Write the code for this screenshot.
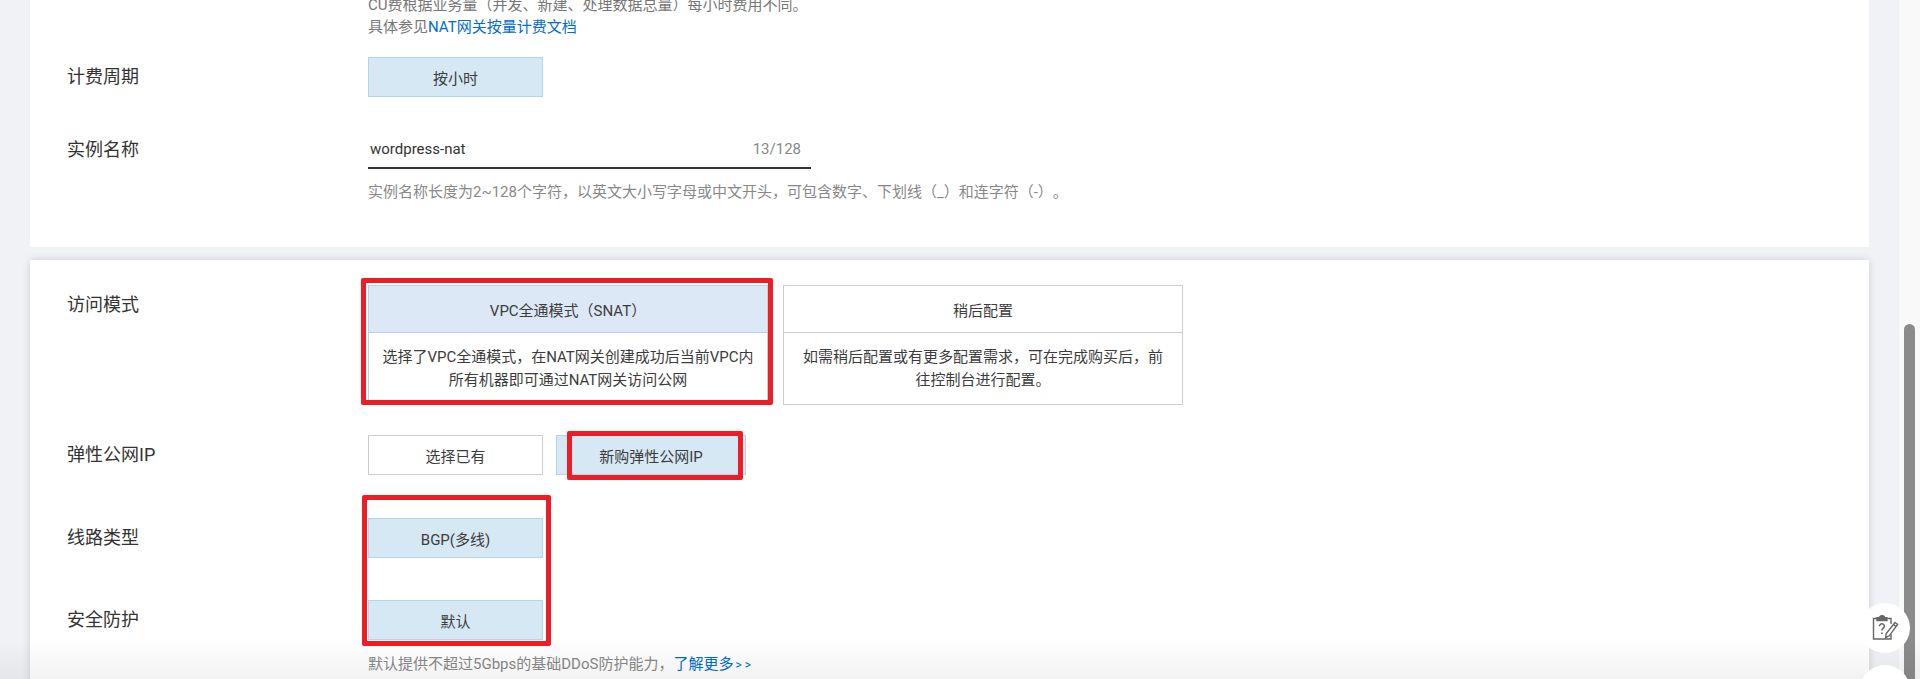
<div class="page">
  <main class="content">
    <section class="card first">
      <p class="note clipped">CU费根据业务量（并发、新建、处理数据总量）每小时费用不同。</p>
      <p class="note doc">具体参见<a href="#a">NAT网关按量计费文档</a></p>
      <div class="row billing">
        <div class="label">计费周期</div>
        <div class="btn on">按小时</div>
      </div>
      <div class="row name">
        <div class="label">实例名称</div>
        <div class="field">
          <div class="input"><span>wordpress-nat</span><span class="count">13/128</span></div>
          <p class="hint">实例名称长度为2~128个字符，以英文大小写字母或中文开头，可包含数字、下划线（_）和连字符（-）。</p>
        </div>
      </div>
    </section>

    <section class="card second">
      <div class="row mode">
        <div class="label">访问模式</div>
        <div class="cards">
          <div class="opt on">
            <div class="opt-h">VPC全通模式（SNAT）</div>
            <div class="opt-b">选择了VPC全通模式，在NAT网关创建成功后当前VPC内所有机器即可通过NAT网关访问公网</div>
            <div class="mark m1"></div>
          </div>
          <div class="opt">
            <div class="opt-h">稍后配置</div>
            <div class="opt-b">如需稍后配置或有更多配置需求，可在完成购买后，前往控制台进行配置。</div>
          </div>
        </div>
      </div>
      <div class="row eip">
        <div class="label">弹性公网IP</div>
        <div class="btns">
          <div class="btn">选择已有</div>
          <div class="btn on wide">新购弹性公网IP<div class="mark m2"></div></div>
        </div>
      </div>
      <div class="row line">
        <div class="label">线路类型</div>
        <div class="btn on">BGP(多线)<div class="mark m3"></div></div>
      </div>
      <div class="row guard">
        <div class="label">安全防护</div>
        <div class="field">
          <div class="btn on">默认</div>
          <p class="hint ddos">默认提供不超过5Gbps的基础DDoS防护能力，<a href="#b">了解更多</a><span class="more">&gt;&gt;</span></p>
        </div>
      </div>
    </section>
  </main>

  <div class="track"><div class="thumb"></div></div>
  <div class="fade"></div>
  <div class="float one">
    <svg width="28" height="28" viewBox="0 0 28 28" fill="none" stroke="#666" stroke-width="1.4">
      <path d="M16.5 4.5H20V10M20 20V25H2.5V4.5H6"/>
      <path d="M6 3.6h2.5a2.5 2 0 0 1 5 0H16v3H6z" fill="#666"/>
      <path d="M8.5 12.2a2.4 2.4 0 1 1 3.6 2.1c-.9.6-1.2 1-1.2 2.2" stroke-width="1.6"/>
      <path d="M10.9 18.4v1.6" stroke-width="1.6"/>
      <path d="M24 8.5l2.6 2-8.3 11.3-3.6 1.7.4-3.8z" fill="#fff"/>
      <path d="M22.5 10.6l2.6 2"/>
    </svg>
  </div>
  <div class="float two"></div>
</div>

<style>
  :global(body) { margin: 0; background: #f0f2f5; }
  .page {
    position: relative; display: flex; width: 1920px; height: 679px; overflow: hidden;
    font-family: Roboto, "Noto Sans CJK SC", sans-serif; color: #333; background: #f0f2f5;
    text-spacing-trim: space-all;
  }
  .content { width: 1899px; flex: none; padding: 0 30px; box-sizing: border-box; }
  .card { width: 1839px; background: #fff; box-sizing: border-box; padding-left: 37px; }
  .first { height: 253px; margin-top: -6px; }
  .second { height: 432px; margin-top: 13px; padding-top: 25px; box-shadow: 0 0 8px rgba(0,0,0,.14); }
  p { margin: 0; }
  a { color: #006cd4; text-decoration: none; }
  .note { font-size: 15px; line-height: 22px; color: #777; padding-left: 301px; }
  .row { display: flex; align-items: flex-start; }
  .label { width: 301px; flex: none; font-size: 18px; line-height: 40px; color: #333; }
  .billing { margin-top: 19px; }
  .name { margin-top: 33px; }
  .btn {
    position: relative; width: 175px; height: 40px; box-sizing: border-box; border: 1px solid #ccc;
    background: #fff; font-size: 15px; display: flex; align-items: center; justify-content: center; color: #3c3c3c;
  }
  .btn.on { background: #d7e8f5; border-color: #b1d4f0; }
  .btn.wide { width: 190px; }
  .field { display: flex; flex-direction: column; }
  .input { width: 443px; height: 39px; border-bottom: 2px solid #333; display: flex; justify-content: space-between; align-items: center; padding: 0 10px 0 2px; box-sizing: border-box; font-size: 15px; }
  .count { color: #888; }
  .hint { font-size: 15px; line-height: 22px; color: #888; margin-top: 12px; }
  .cards { display: flex; gap: 15px; }
  .opt { position: relative; width: 400px; height: 120px; box-sizing: border-box; border: 1px solid #ccc; font-size: 15px; color: #3c3c3c; display: flex; flex-direction: column; }
  .opt-h { height: 47px; flex: none; box-sizing: border-box; border-bottom: 1px solid #ccc; display: flex; align-items: center; justify-content: center; }
  .opt-b { flex: 1; padding: 0 12px; display: flex; align-items: center; text-align: center; line-height: 23px; }
  .opt.on .opt-h { background: #dce8f5; border-bottom-color: #b1d4f0; }
  .opt.on { border-color: #b1d4f0 #ccc #ccc #b1d4f0; }
  .eip { margin-top: 30px; }
  .btns { display: flex; gap: 13px; }
  .line { margin-top: 43px; }
  .guard { margin-top: 42px; }
  .ddos { margin-top: 13px; }
  .more { color: #006cd4; font-size: 12px; letter-spacing: 3px; margin-left: 2px; }
  .mark { position: absolute; box-sizing: border-box; border: 5px solid #ee1c25; border-radius: 2px; pointer-events: none; }
  .m1 { left: -8px; top: -8px; width: 412px; height: 127px; }
  .m2 { left: 10px; top: -5px; width: 176px; height: 49px; }
  .m3 { left: -7px; top: -24px; width: 189px; height: 151px; }
  .track { position: absolute; top: 0; right: 0; width: 21px; height: 679px; background: #f9f9f9; }
  .thumb { width: 11px; height: 400px; margin: 324px 0 0 5px; border-radius: 6px; background: #8b8b8b; }
  .fade { position: absolute; left: 0; right: 0; bottom: 0; height: 40px; background: linear-gradient(rgba(0,0,0,0), rgba(0,0,0,.05)); pointer-events: none; }
  .float { position: absolute; width: 50px; height: 50px; border-radius: 50%; background: #fff; left: 1860px; display: flex; align-items: center; justify-content: center; }
  .one { top: 603px; }
  .two { top: 665px; }
</style>
